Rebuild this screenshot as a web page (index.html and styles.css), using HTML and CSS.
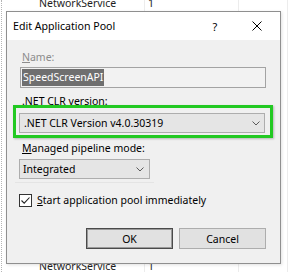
FILE: index.html
```html
<!DOCTYPE html>
<html>
<head>
<meta charset="utf-8">
<link rel="stylesheet" href="styles.css">
</head>
<body>
<div class="bg">
  <div class="col col1"><span class="cell top">NetworkService</span><span class="cell bottom">NetworkService</span></div>
  <div class="col col2"><span class="cell top">1</span><span class="cell bottom">1</span></div>
  <div class="col col3"></div>
</div>

<div class="dialog">
  <div class="titlebar">
    <span class="title">Edit Application Pool</span>
    <span class="tb-btn help">?</span>
    <span class="tb-btn close">
      <svg width="10" height="10" viewBox="0 0 10 10"><path d="M0.5 0.5 L9.5 9.5 M9.5 0.5 L0.5 9.5" stroke="#000" stroke-width="1" fill="none"/></svg>
    </span>
  </div>
  <div class="content">
    <div class="label disabled lbl-name"><u>N</u>ame:</div>
    <div class="textbox"><span class="sel">SpeedScreenAPI</span></div>
    <div class="label lbl-clr">.NET <u>C</u>LR version:</div>
    <div class="combo combo-clr">
      <span class="combo-text">.NET CLR Version v4.0.30319</span>
      <svg class="chev" width="8" height="5" viewBox="0 0 8 5"><path d="M0.5 0.5 L4 4 L7.5 0.5" stroke="#5a5a5a" stroke-width="1" fill="none"/></svg>
    </div>
    <div class="label lbl-pipe"><u>M</u>anaged pipeline mode:</div>
    <div class="combo combo-pipe">
      <span class="combo-text">Integrated</span>
      <svg class="chev" width="8" height="5" viewBox="0 0 8 5"><path d="M0.5 0.5 L4 4 L7.5 0.5" stroke="#5a5a5a" stroke-width="1" fill="none"/></svg>
    </div>
    <div class="sep"></div>
    <div class="check-row">
      <span class="checkbox">
        <svg width="11" height="11" viewBox="0 0 11 11"><path d="M1.5 5.5 L4.2 8.2 L9.5 2.5" stroke="#222" stroke-width="1.1" fill="none"/></svg>
      </span>
      <span class="check-label"><u>S</u>tart application pool immediately</span>
    </div>
    <div class="buttons">
      <span class="btn btn-default">OK</span>
      <span class="btn">Cancel</span>
    </div>
  </div>
  <div class="highlight"></div>
</div>
</body>
</html>
```

FILE: styles.css
```css
html, body {
  margin: 0;
  padding: 0;
}
body {
  width: 290px;
  height: 272px;
  overflow: hidden;
  background: #ffffff;
  font-family: "Noto Sans", "Open Sans", sans-serif;
  font-size: 10.5px;
  color: #000;
  position: relative;
}
u {
  text-decoration: underline;
  text-underline-offset: 1px;
}

/* background list */
.bg {
  display: flex;
  height: 272px;
  margin-left: 1px;
  border-left: 1px dotted #b5b5b5;
}
.col {
  display: flex;
  flex-direction: column;
  justify-content: space-between;
  height: 272px;
}
.col1 {
  width: 142px;
  padding-left: 37px;
  box-sizing: border-box;
}
.col2 {
  width: 94px;
  padding-left: 3px;
  box-sizing: border-box;
  border-left: 1px solid #ececec;
}
.col3 {
  width: 48px;
  border-left: 1px solid #ececec;
  border-right: 1px solid #ececec;
}
.cell {
  line-height: 13px;
  color: #1e1e1e;
  white-space: nowrap;
}
.cell.top {
  margin-top: -3px;
}
.cell.bottom {
  margin-bottom: -1px;
}

/* dialog */
.dialog {
  position: absolute;
  left: 6px;
  top: 11px;
  width: 275px;
  height: 253px;
  box-sizing: border-box;
  border: 1px solid #8f8f8f;
  background: #f0f0f0;
  display: flex;
  flex-direction: column;
  box-shadow: 1px 1px 3px rgba(0,0,0,0.12);
}
.titlebar {
  height: 28px;
  background: #ffffff;
  display: flex;
  align-items: center;
  padding-left: 6px;
}
.title {
  flex: 1;
  font-size: 10.6px;
  white-space: nowrap;
}
.tb-btn {
  display: flex;
  align-items: center;
  justify-content: center;
  height: 28px;
}
.help {
  width: 38px;
  font-size: 11px;
}
.close {
  width: 46px;
}

.content {
  flex: 1;
  display: flex;
  flex-direction: column;
  align-items: flex-start;
  padding: 0 14px 0 12px;
}
.label {
  line-height: 14px;
  padding-left: 3px;
  white-space: nowrap;
}
.disabled {
  color: #8c8c8c;
}
.lbl-name { margin-top: 10px; }
.lbl-clr { margin-top: 6px; }
.lbl-pipe { margin-top: 8px; }

.textbox {
  margin-top: 3px;
  margin-left: 1px;
  width: 246px;
  height: 21px;
  box-sizing: border-box;
  border: 1px solid #a3a3a3;
  background: #f2f2f2;
  display: flex;
  align-items: center;
  padding-left: 1px;
}
.sel {
  background: #6f6f6f;
  color: #ffffff;
  line-height: 17px;
  padding: 0 1px;
  white-space: nowrap;
}

.combo {
  box-sizing: border-box;
  border: 1px solid #adadad;
  background: #e5e5e5;
  display: flex;
  align-items: center;
  justify-content: space-between;
  white-space: nowrap;
}
.combo-clr {
  margin-top: 5px;
  width: 246px;
  height: 20px;
  padding: 0 4px 0 4px;
}
.combo-pipe {
  margin-top: 4px;
  width: 131px;
  height: 20px;
  padding: 0 5px 0 3px;
}

.sep {
  margin-top: 3px;
  margin-left: -4px;
  width: 139px;
  height: 1px;
  background: #e4e4e4;
}

.check-row {
  margin-top: 10px;
  display: flex;
  align-items: center;
  height: 14px;
}
.checkbox {
  width: 13px;
  height: 13px;
  box-sizing: border-box;
  border: 1px solid #333333;
  background: #ffffff;
  display: flex;
  align-items: center;
  justify-content: center;
}
.check-label {
  margin-left: 5px;
  white-space: nowrap;
}

.buttons {
  margin-top: 21px;
  align-self: stretch;
  display: flex;
  justify-content: flex-end;
  gap: 6px;
}
.btn {
  width: 87px;
  height: 21px;
  box-sizing: border-box;
  border: 1px solid #adadad;
  background: #e1e1e1;
  display: flex;
  align-items: center;
  justify-content: center;
}
.btn-default {
  border: 1px solid #4a4a4a;
  box-shadow: inset 0 0 0 1px #9a9a9a;
}

.highlight {
  position: absolute;
  left: 6px;
  top: 93px;
  width: 260px;
  height: 33px;
  box-sizing: border-box;
  border: 3px solid #22c922;
  box-shadow: 1px 1px 2px rgba(0,0,0,0.25);
}
```
